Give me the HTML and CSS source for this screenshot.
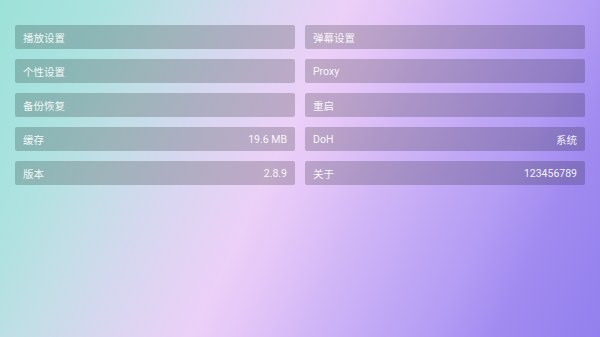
FILE: index.html
```html
<!DOCTYPE html>
<html lang="zh">
<head>
<meta charset="utf-8">
<link rel="stylesheet" href="styles.css">
</head>
<body>
<div class="page">
  <div class="grid">
    <div class="item"><span>播放设置</span></div>
    <div class="item"><span>弹幕设置</span></div>
    <div class="item"><span>个性设置</span></div>
    <div class="item"><span>Proxy</span></div>
    <div class="item"><span>备份恢复</span></div>
    <div class="item"><span>重启</span></div>
    <div class="item"><span>缓存</span><span>19.6 MB</span></div>
    <div class="item"><span>DoH</span><span>系统</span></div>
    <div class="item"><span>版本</span><span>2.8.9</span></div>
    <div class="item"><span>关于</span><span>123456789</span></div>
  </div>
</div>
</body>
</html>
```
FILE: styles.css
```css
html, body {
  margin: 0;
  padding: 0;
  width: 600px;
  height: 337px;
  overflow: hidden;
}
.page {
  width: 600px;
  height: 337px;
  box-sizing: border-box;
  padding: 25px 15px 0 15px;
  background: linear-gradient(115deg, #9de2d9 0%, #ace2e0 14%, #c3dee6 24%, #d6d7ef 33%, #ebd0f7 46%, #e4c7f7 52%, #d3b8f6 60%, #c1a8f5 70%, #b39cf3 78%, #a18bf0 86%, #9380ee 100%);
  font-family: Roboto, "Noto Sans CJK SC", sans-serif;
}
.grid {
  display: grid;
  grid-template-columns: 280px 280px;
  column-gap: 10px;
  row-gap: 10px;
}
.item {
  height: 24px;
  box-sizing: border-box;
  padding: 0 8px;
  display: flex;
  align-items: center;
  justify-content: space-between;
  background: rgba(0, 0, 0, 0.19);
  border-radius: 2px;
  color: rgba(255, 255, 255, 0.92);
  font-size: 10.5px;
}
```
